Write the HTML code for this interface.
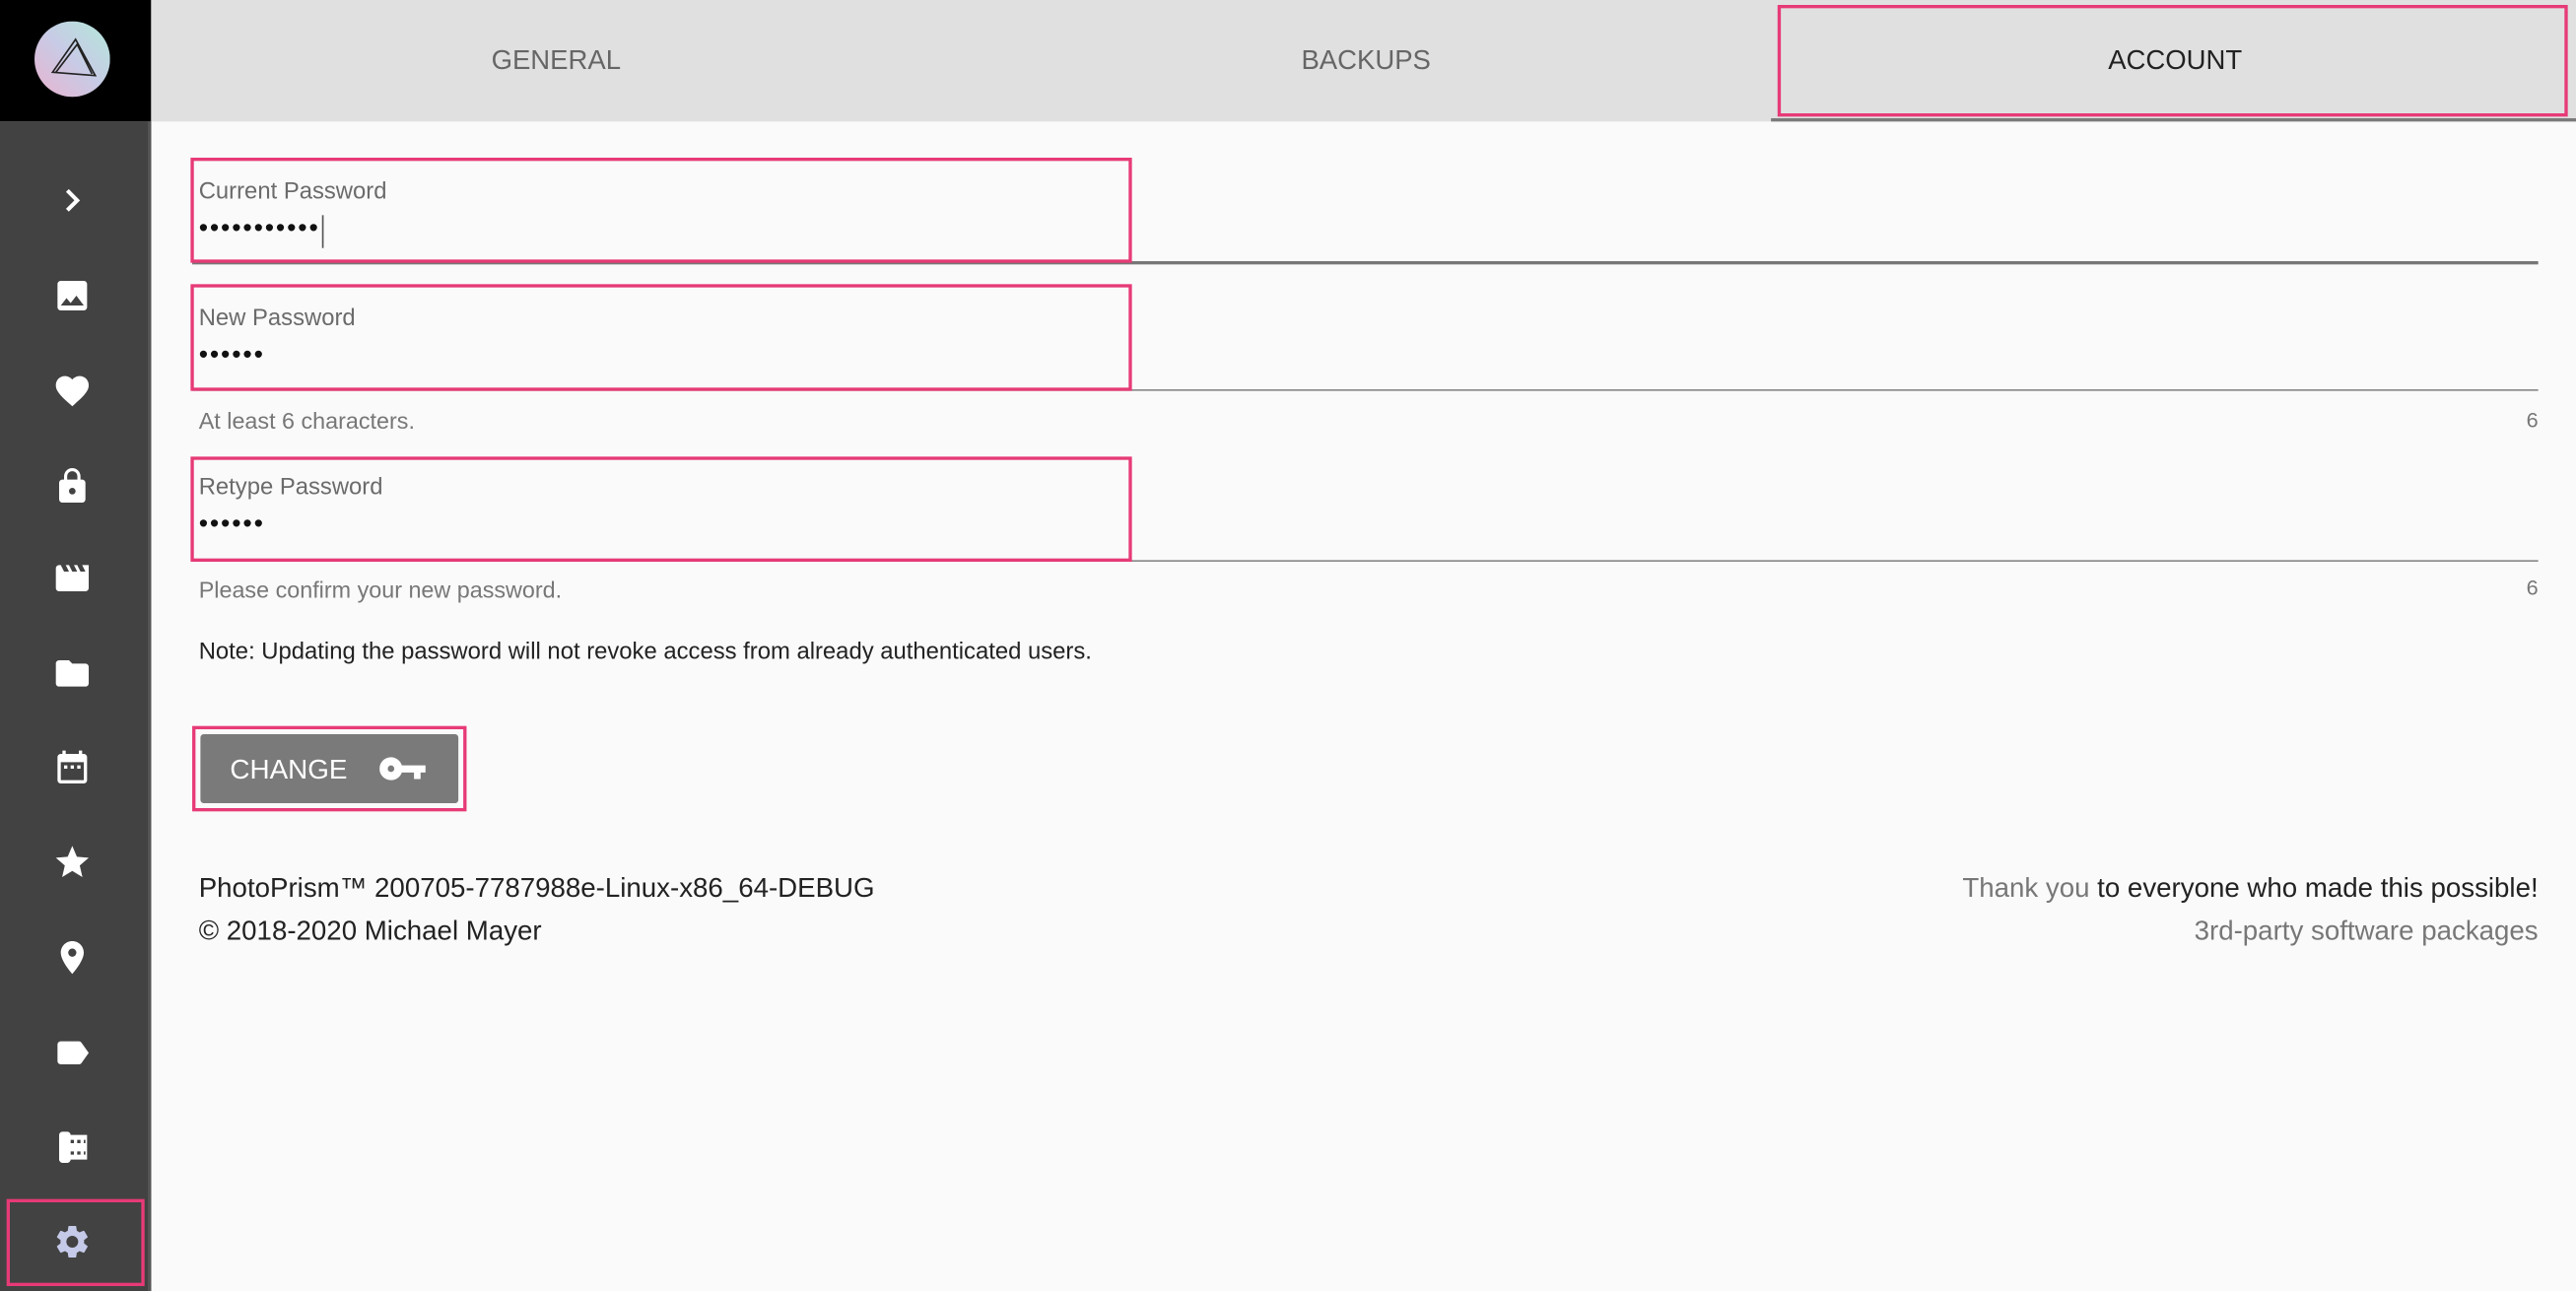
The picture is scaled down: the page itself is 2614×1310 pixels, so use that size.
<!DOCTYPE html>
<html><head><meta charset="utf-8"><style>
html,body{margin:0;padding:0;width:2614px;height:1310px;overflow:hidden;background:#fafafa}
#w{position:absolute;left:0;top:0;width:1568px;height:786px;transform:scale(1.66709,1.66667);transform-origin:0 0;font-family:"Liberation Sans",sans-serif;background:#fafafa}
.a{position:absolute}
.pk{position:absolute;border:2px solid #e73a77;box-sizing:border-box}
.ic{position:absolute;left:32px;width:24px;height:24px}
.lbl{font-size:14.3px;color:#6b6b6b}
.dots{font-size:16px;color:#111;letter-spacing:1.1px}
.line{position:absolute;left:117px;right:23px;height:1px;background:#8a8a8a}
</style></head><body><div id="w">
<div class="a" style="left:0;top:0;width:92px;height:74px;background:#000"></div>
<div class="a" style="left:0;top:74px;width:92px;height:712px;background:#424242"></div>
<div class="a" style="left:90px;top:74px;width:2px;height:712px;background:#555"></div>
<svg class="a" style="left:21px;top:13px" width="46" height="46" viewBox="0 0 46 46"><defs><linearGradient id="g" x1="0" y1="1" x2="1" y2="0"><stop offset="0" stop-color="#e9b3cf"/><stop offset=".5" stop-color="#c8cbe6"/><stop offset="1" stop-color="#b3e7d9"/></linearGradient></defs><circle cx="23" cy="23" r="23" fill="url(#g)"/><path d="M11 31 L25 11 L37 33 Z M13 31 L26 14 L35 32" fill="none" stroke="#222" stroke-width="1"/></svg>
<svg class="ic" style="top:110px" viewBox="0 0 24 24"><path d="M9 6l6 6-6 6" fill="none" stroke="#fff" stroke-width="2.4"/></svg>
<svg class="ic" style="top:168px" viewBox="0 0 24 24"><path fill="#fff" d="M21 19V5c0-1.1-.9-2-2-2H5c-1.1 0-2 .9-2 2v14c0 1.1.9 2 2 2h14c1.1 0 2-.9 2-2zM8.5 13.5l2.5 3 3.5-4.5 4.5 6H5l3.5-4.5z"/></svg>
<svg class="ic" style="top:226px" viewBox="0 0 24 24"><path fill="#fff" d="M12 21.35l-1.45-1.32C5.4 15.360 2 12.28 2 8.5 2 5.42 4.42 3 7.5 3c1.74 0 3.41.81 4.5 2.09C13.09 3.81 14.76 3 16.5 3 19.58 3 22 5.42 22 8.5c0 3.780-3.4 6.86-8.55 11.54L12 21.35z"/></svg>
<svg class="ic" style="top:284px" viewBox="0 0 24 24"><path fill="#fff" d="M18 8h-1V6c0-2.76-2.24-5-5-5S7 3.24 7 6v2H6c-1.1 0-2 .9-2 2v10c0 1.1.9 2 2 2h12c1.1 0 2-.9 2-2V10c0-1.1-.9-2-2-2zm-6 9c-1.1 0-2-.9-2-2s.9-2 2-2 2 .9 2 2-.9 2-2 2zm3.1-9H8.9V6c0-1.71 1.39-3.1 3.1-3.1 1.71 0 3.1 1.39 3.1 3.1v2z"/></svg>
<svg class="ic" style="top:340px" viewBox="0 0 24 24"><path fill="#fff" d="M18 4l2 4h-3l-2-4h-2l2 4h-3l-2-4H8l2 4H7L5 4H4c-1.1 0-2 .9-2 2v12c0 1.1.9 2 2 2h16c1.1 0 2-.9 2-2V4h-4z"/></svg>
<svg class="ic" style="top:398px" viewBox="0 0 24 24"><path fill="#fff" d="M10 4H4c-1.1 0-2 .9-2 2v12c0 1.1.9 2 2 2h16c1.1 0 2-.9 2-2V8c0-1.1-.9-2-2-2h-8l-2-2z"/></svg>
<svg class="ic" style="top:456px" viewBox="0 0 24 24"><path fill="#fff" d="M19 3h-1V1h-2v2H8V1H6v2H5c-1.1 0-2 .9-2 2v14c0 1.1.9 2 2 2h14c1.1 0 2-.9 2-2V5c0-1.1-.9-2-2-2zm0 16H5V8h14v11zM7 10h2v2H7zm4 0h2v2h-2zm4 0h2v2h-2z"/></svg>
<svg class="ic" style="top:513px" viewBox="0 0 24 24"><path fill="#fff" d="M12 17.27L18.18 21l-1.64-7.03L22 9.24l-7.19-.61L12 2 9.19 8.630 2 9.24l5.46 4.73L5.82 21z"/></svg>
<svg class="ic" style="top:571px" viewBox="0 0 24 24"><path fill="#fff" d="M12 2C8.13 2 5 5.13 5 9c0 5.25 7 13 7 13s7-7.75 7-13c0-3.87-3.13-7-7-7zm0 9.5a2.5 2.5 0 010-5 2.5 2.5 0 010 5z"/></svg>
<svg class="ic" style="top:629px" viewBox="0 0 24 24"><path fill="#fff" d="M17.63 5.84C17.27 5.33 16.67 5 16 5L5 5.01C3.9 5.01 3 5.9 3 7v10c0 1.1.9 1.99 2 1.99L16 19c.67 0 1.27-.33 1.63-.84L22 12l-4.37-6.16z"/></svg>
<svg class="ic" style="top:686px" viewBox="0 0 24 24"><path fill="#fff" d="M4 5c0-1 1-2 2-2h3c1 0 2 1 2 2h10v15H11c0 1-1 2-2 2H6c-1 0-2-1-2-2zM11 8v2h2V8zm4 0v2h2V8zm4 0v2h1V8zm-8 7v2h2v-2zm4 0v2h2v-2zm4 0v2h1v-2z"/></svg>
<svg class="ic" style="top:744px" viewBox="0 0 24 24"><path fill="#c5cae9" d="M19.14 12.94c.04-.3.06-.61.06-.94 0-.32-.02-.64-.07-.94l2.03-1.58a.49.49 0 00.12-.61l-1.92-3.32a.49.49 0 00-.59-.22l-2.39.96c-.5-.38-1.03-.7-1.62-.94l-.36-2.54a.48.48 0 00-.48-.41h-3.84c-.24 0-.43.17-.47.41l-.36 2.54c-.59.24-1.13.57-1.62.94l-2.39-.96a.48.48 0 00-.59.22L2.74 8.87c-.12.21-.08.47.12.61l2.03 1.58c-.05.3-.09.63-.09.94s.02.64.07.94l-2.03 1.58a.49.49 0 00-.12.61l1.92 3.32c.12.22.37.29.59.22l2.39-.96c.5.38 1.03.7 1.62.94l.36 2.54c.05.24.24.41.48.41h3.84c.24 0 .44-.17.47-.41l.36-2.54c.59-.24 1.13-.56 1.62-.94l2.39.96c.22.08.47 0 .59-.22l1.92-3.32c.12-.22.07-.47-.12-.61l-2.01-1.58zM12 15.6A3.6 3.6 0 1112 8.4a3.6 3.6 0 010 7.2z"/></svg>
<div class="pk" style="left:4px;top:730px;width:84px;height:53px"></div>

<div class="a" style="left:92px;top:0;width:1476px;height:74px;background:#e0e0e0"></div>
<div class="a" style="left:92px;top:1px;width:493px;height:72px;line-height:72px;text-align:center;font-size:16.5px;color:#666">GENERAL</div>
<div class="a" style="left:585px;top:1px;width:493px;height:72px;line-height:72px;text-align:center;font-size:16.5px;color:#666">BACKUPS</div>
<div class="a" style="left:1080px;top:1px;width:488px;height:72px;line-height:72px;text-align:center;font-size:16.5px;color:#222">ACCOUNT</div>
<div class="a" style="left:1078px;top:72px;width:490px;height:2px;background:#7a7a7a"></div>
<div class="pk" style="left:1082px;top:3px;width:481px;height:68px"></div>

<div class="a lbl" style="left:121px;top:109px">Current Password</div>
<div class="a dots" style="left:121px;top:131px">•••••••••••</div>
<div class="a" style="left:196px;top:131px;width:1px;height:20px;background:#555"></div>
<div class="line" style="top:159px;height:2px;background:#777"></div>
<div class="pk" style="left:116px;top:96px;width:573px;height:64px"></div>

<div class="a lbl" style="left:121px;top:186px">New Password</div>
<div class="a dots" style="left:121px;top:208px">••••••</div>
<div class="line" style="top:237px"></div>
<div class="pk" style="left:116px;top:173px;width:573px;height:65px"></div>
<div class="a" style="left:121px;top:248px;font-size:14px;color:#777">At least 6 characters.</div>
<div class="a" style="right:23px;top:248px;font-size:13px;color:#777">6</div>

<div class="a lbl" style="left:121px;top:289px">Retype Password</div>
<div class="a dots" style="left:121px;top:311px">••••••</div>
<div class="line" style="top:341px"></div>
<div class="pk" style="left:116px;top:278px;width:573px;height:64px"></div>
<div class="a" style="left:121px;top:351px;font-size:14px;color:#777">Please confirm your new password.</div>
<div class="a" style="right:23px;top:350px;font-size:13px;color:#777">6</div>

<div class="a" style="left:121px;top:389px;font-size:14.3px;color:#222">Note: Updating the password will not revoke access from already authenticated users.</div>

<div class="a" style="left:122px;top:447px;width:157px;height:42px;background:#7a7a7a;border-radius:2px"></div>
<div class="a" style="left:140px;top:459px;font-size:16.7px;color:#fff">CHANGE</div>
<svg class="a" style="left:231px;top:458px" width="30" height="20" viewBox="0 0 30 20"><path fill="#fff" d="M7 3a7 7 0 100 14 7 7 0 006.6-4.7H21v4h4v-4h3V8H13.6A7 7 0 007 3zm0 5a2 2 0 110 4 2 2 0 010-4z"/></svg>
<div class="pk" style="left:117px;top:442px;width:167px;height:52px"></div>

<div class="a" style="left:121px;top:531px;font-size:16.6px;color:#222">PhotoPrism™ 200705-7787988e-Linux-x86_64-DEBUG</div>
<div class="a" style="left:121px;top:557px;font-size:16.6px;color:#222">© 2018-2020 Michael Mayer</div>
<div class="a" style="right:23px;top:531px;font-size:16.6px;color:#222"><span style="color:#777">Thank you</span> to everyone who made this possible!</div>
<div class="a" style="right:23px;top:557px;font-size:16.6px;color:#777">3rd-party software packages</div>
</div></body></html>
